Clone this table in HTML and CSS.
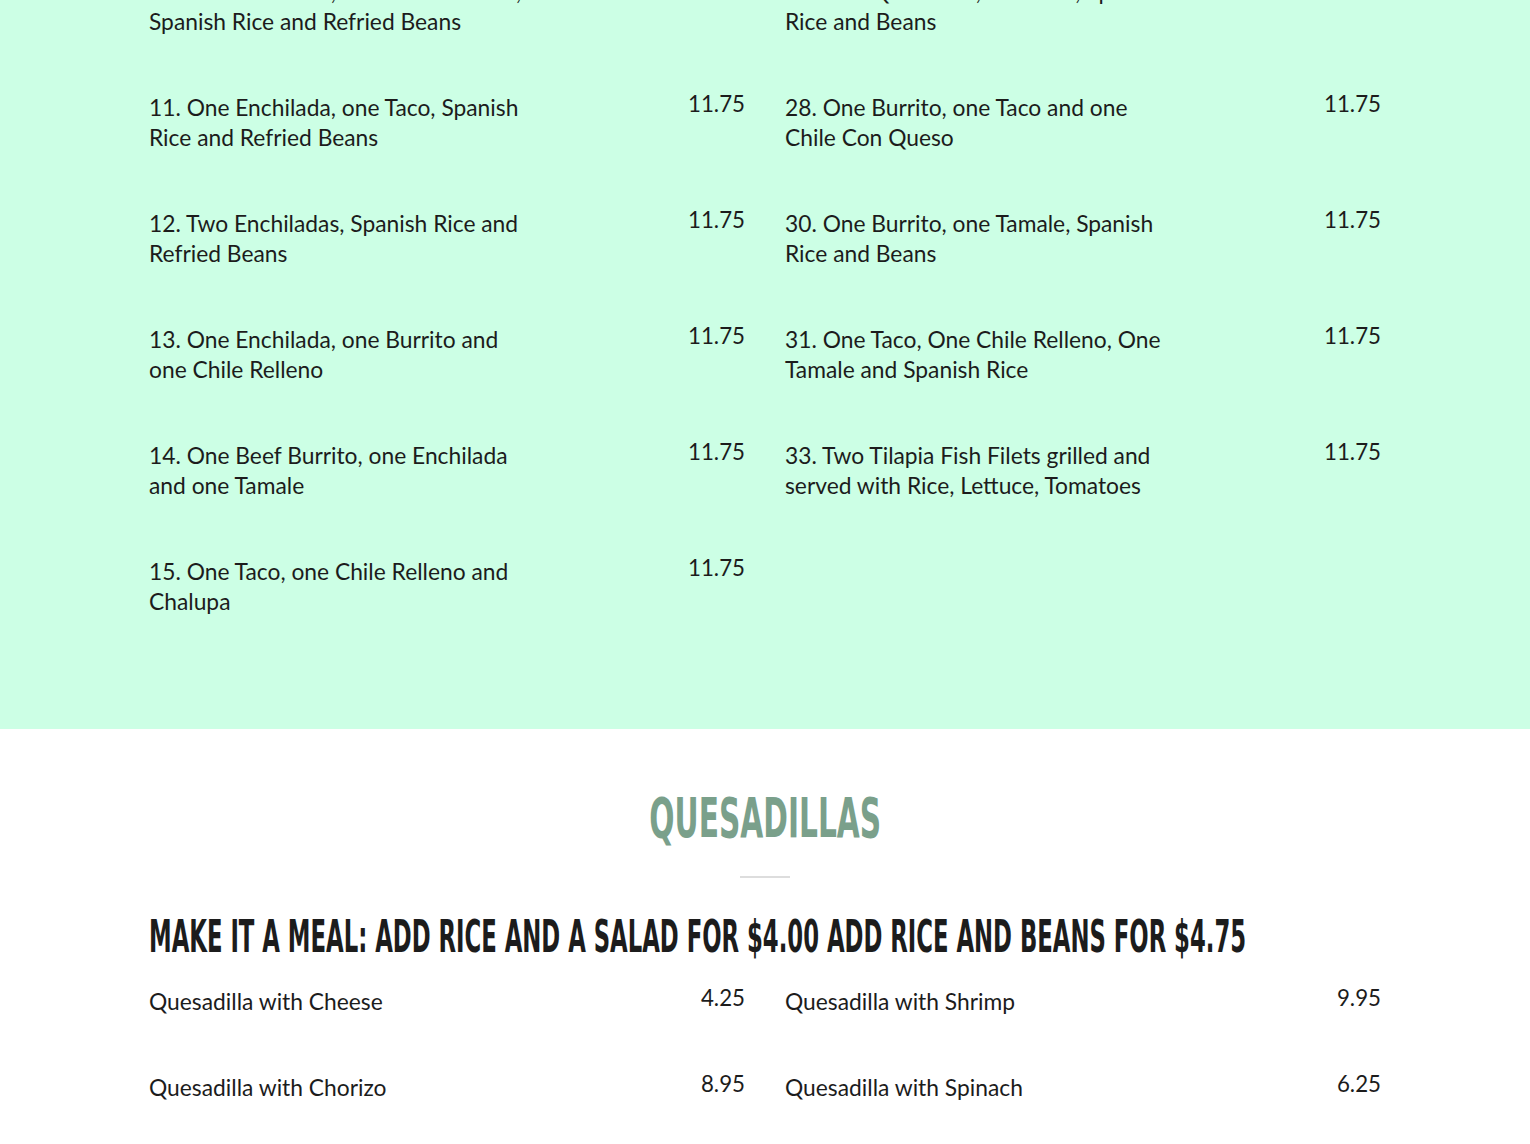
FILE: index.html
```html
<!DOCTYPE html>
<html lang="en">
<head>
<meta charset="utf-8">
<title>Menu</title>
<link rel="stylesheet" href="styles.css">
</head>
<body>
<section class="band band-mint">
  <div class="container">
    <div class="menu-grid scrolled">
      <div class="item"><div class="desc">10. One Enchilada, one Chile Relleno, Spanish Rice and Refried Beans</div><div class="price">11.75</div></div>
      <div class="item"><div class="desc">27. One Quesadilla, one Taco, Spanish Rice and Beans</div><div class="price">11.75</div></div>
      <div class="item"><div class="desc">11. One Enchilada, one Taco, Spanish Rice and Refried Beans</div><div class="price">11.75</div></div>
      <div class="item"><div class="desc">28. One Burrito, one Taco and one Chile Con Queso</div><div class="price">11.75</div></div>
      <div class="item"><div class="desc">12. Two Enchiladas, Spanish Rice and Refried Beans</div><div class="price">11.75</div></div>
      <div class="item"><div class="desc">30. One Burrito, one Tamale, Spanish Rice and Beans</div><div class="price">11.75</div></div>
      <div class="item"><div class="desc">13. One Enchilada, one Burrito and one Chile Relleno</div><div class="price">11.75</div></div>
      <div class="item"><div class="desc">31. One Taco, One Chile Relleno, One Tamale and Spanish Rice</div><div class="price">11.75</div></div>
      <div class="item"><div class="desc">14. One Beef Burrito, one Enchilada and one Tamale</div><div class="price">11.75</div></div>
      <div class="item"><div class="desc">33. Two Tilapia Fish Filets grilled and served with Rice, Lettuce, Tomatoes</div><div class="price">11.75</div></div>
      <div class="item"><div class="desc">15. One Taco, one Chile Relleno and Chalupa</div><div class="price">11.75</div></div>
    </div>
  </div>
</section>
<section class="band band-white">
  <div class="container">
    <h2 class="section-title"><span class="squeeze squeeze-center">QUESADILLAS</span></h2>
    <div class="divider"></div>
    <h3 class="note"><span class="squeeze">MAKE IT A MEAL: ADD RICE AND A SALAD FOR $4.00 ADD RICE AND BEANS FOR $4.75</span></h3>
    <div class="menu-grid">
      <div class="item"><div class="desc">Quesadilla with Cheese</div><div class="price">4.25</div></div>
      <div class="item"><div class="desc">Quesadilla with Shrimp</div><div class="price">9.95</div></div>
      <div class="item"><div class="desc">Quesadilla with Chorizo</div><div class="price">8.95</div></div>
      <div class="item"><div class="desc">Quesadilla with Spinach</div><div class="price">6.25</div></div>
    </div>
  </div>
</section>
</body>
</html>
```

FILE: styles.css
```css
html, body {
  margin: 0;
  padding: 0;
}
body {
  font-family: "Lato", "Noto Sans", sans-serif;
  color: #1c1c1c;
  background: #ffffff;
  overflow: hidden;
}
.band-mint {
  background: #ccffe5;
  padding-bottom: 113px;
}
.band-white {
  background: #ffffff;
  padding-top: 58px;
}
.container {
  width: 1232px;
  margin: 0 auto;
}
.menu-grid {
  display: grid;
  grid-template-columns: 1fr 1fr;
  column-gap: 40px;
  row-gap: 56px;
}
.menu-grid.scrolled {
  margin-top: -24px;
}
.item {
  display: flex;
  justify-content: space-between;
  align-items: flex-start;
}
.desc {
  max-width: 380px;
  font-size: 22.8px;
  line-height: 30px;
}
.price {
  font-size: 22.3px;
  line-height: 24px;
}
.squeeze {
  display: inline-block;
  white-space: nowrap;
  transform: scaleX(0.575);
  transform-origin: left center;
}
.squeeze-center {
  transform: scaleX(0.6);
  transform-origin: center center;
}
.section-title {
  margin: 0;
  text-align: center;
  font-family: "DejaVu Sans Condensed", "DejaVu Sans", sans-serif;
  font-weight: 700;
  font-size: 55px;
  line-height: 62px;
  color: #7aa08b;
  overflow: hidden;
}
.divider {
  width: 50px;
  height: 2px;
  background: #dddddd;
  margin: 27px auto 0;
}
.note {
  margin: 37px 0 27px;
  font-family: "DejaVu Sans Condensed", "DejaVu Sans", sans-serif;
  font-weight: 700;
  font-size: 44px;
  line-height: 44px;
  color: #1c1c1c;
  white-space: nowrap;
  overflow: hidden;
}
```
